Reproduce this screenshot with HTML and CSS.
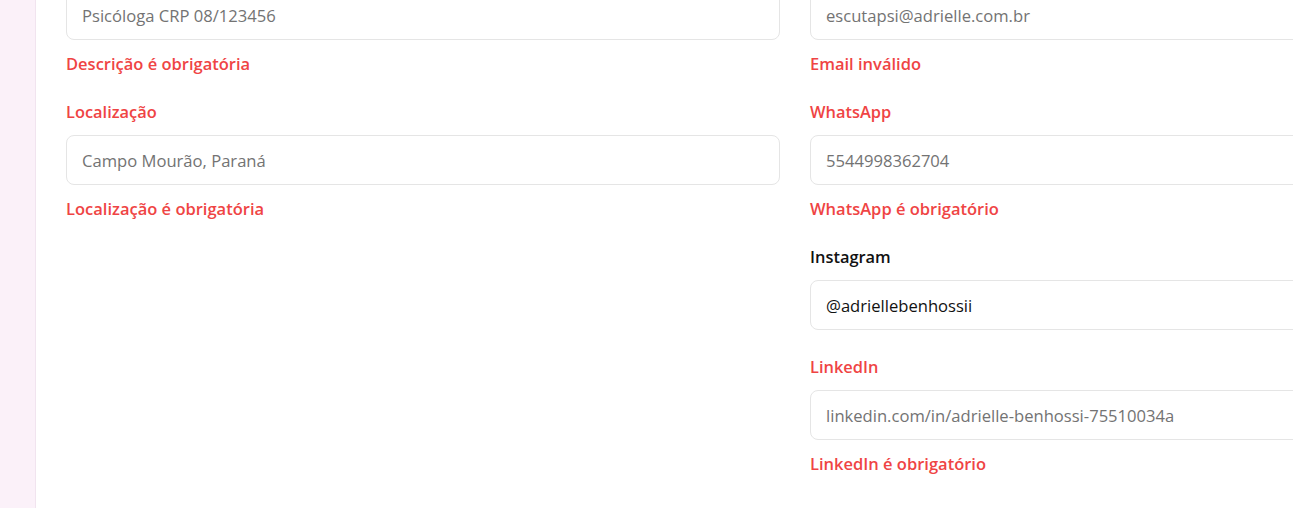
FILE: index.html
```html
<!DOCTYPE html>
<html lang="pt-BR">
<head>
<meta charset="utf-8">
<title>Perfil</title>
<link rel="stylesheet" href="styles.css">
</head>
<body>
<div class="layout">
  <aside class="sidebar"></aside>
  <main class="content">
    <form class="form-grid">
      <div class="col">
        <div class="field">
          <input class="input" type="text" placeholder="Psicóloga CRP 08/123456">
          <p class="error">Descrição é obrigatória</p>
        </div>
        <div class="field">
          <label class="label label-error">Localização</label>
          <input class="input" type="text" placeholder="Campo Mourão, Paraná">
          <p class="error">Localização é obrigatória</p>
        </div>
      </div>
      <div class="col">
        <div class="field">
          <input class="input" type="text" placeholder="escutapsi@adrielle.com.br">
          <p class="error">Email inválido</p>
        </div>
        <div class="field">
          <label class="label label-error">WhatsApp</label>
          <input class="input" type="text" placeholder="5544998362704">
          <p class="error">WhatsApp é obrigatório</p>
        </div>
        <div class="field">
          <label class="label">Instagram</label>
          <input class="input" type="text" value="@adriellebenhossii">
        </div>
        <div class="field">
          <label class="label label-error">LinkedIn</label>
          <input class="input" type="text" placeholder="linkedin.com/in/adrielle-benhossi-75510034a">
          <p class="error">LinkedIn é obrigatório</p>
        </div>
      </div>
    </form>
  </main>
</div>
</body>
</html>
```

FILE: styles.css
```css
* { box-sizing: border-box; }
html, body {
  margin: 0;
  padding: 0;
  height: 100%;
  overflow: hidden;
  background: #ffffff;
  font-family: "Open Sans", "Noto Sans", sans-serif;
}
.layout {
  display: flex;
  min-height: 100%;
}
.sidebar {
  flex: 0 0 36px;
  background: #fbf1f9;
  border-right: 1px solid #f1e4ef;
}
.content {
  flex: 1 0 auto;
  padding-left: 30px;
}
.form-grid {
  display: grid;
  grid-template-columns: 714px 714px;
  column-gap: 30px;
  margin-top: -10px;
}
.col {
  display: flex;
  flex-direction: column;
  gap: 25px;
}
.field {
  display: flex;
  flex-direction: column;
}
.label {
  display: block;
  font-size: 16.4px;
  font-weight: 600;
  line-height: 24px;
  color: #111111;
  margin-bottom: 11px;
}
.label-error { color: #ef4444; }
.input {
  width: 100%;
  height: 50px;
  padding: 0 15px;
  border: 1px solid #e5e5e5;
  border-radius: 8px;
  background: #fff;
  font-family: inherit;
  font-size: 16.6px;
  color: #111111;
  outline: none;
}
.input::placeholder { color: #737373; }
.error {
  margin: 12px 0 0;
  font-size: 16.5px;
  font-weight: 600;
  line-height: 23px;
  color: #ef4444;
}
```
